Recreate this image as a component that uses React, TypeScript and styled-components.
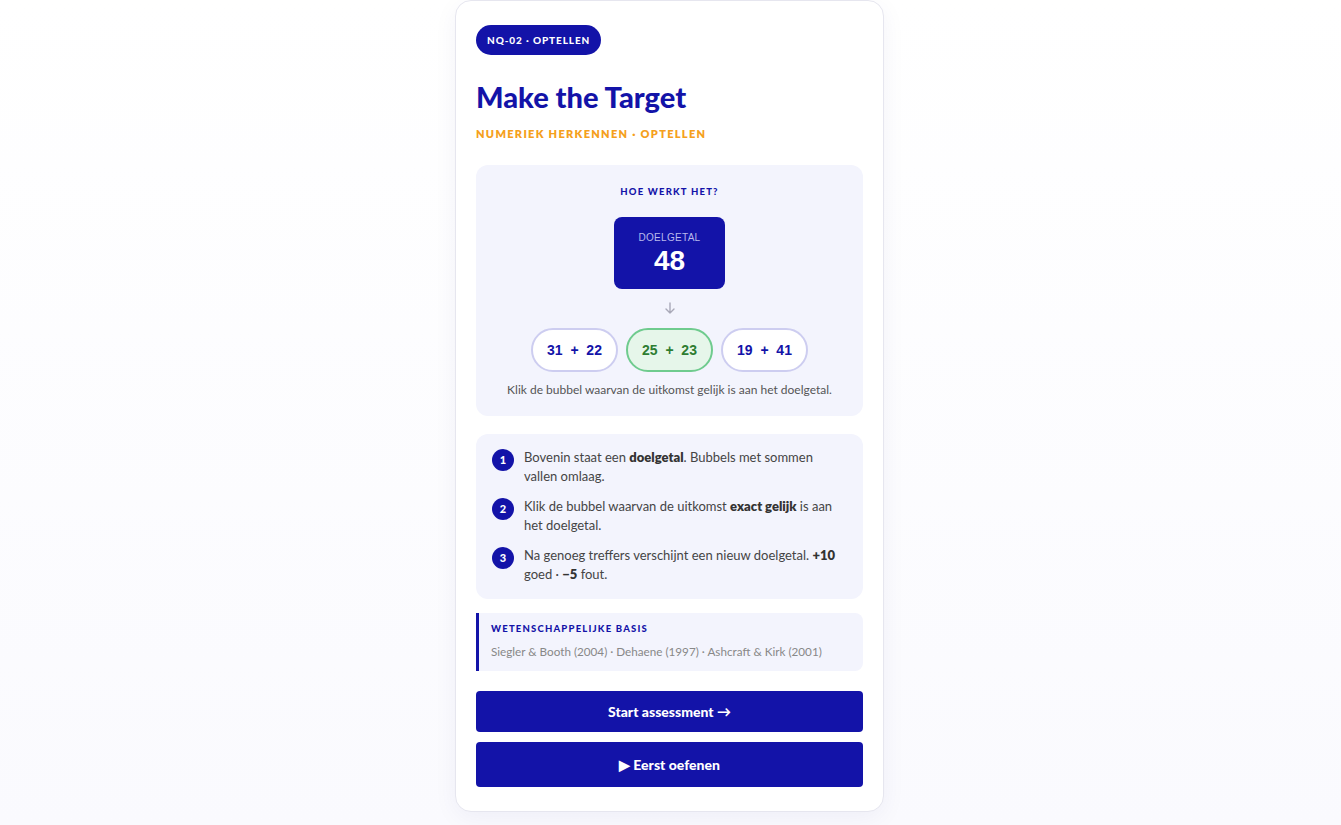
import styled, { createGlobalStyle } from "styled-components";

const Global = createGlobalStyle`
  body {
    margin: 0;
    background: #ffffff;
    font-family: "Lato", "Noto Sans", sans-serif;
    color: #444;
  }
`;

const Page = styled.div`
  display: flex;
  justify-content: center;
  padding: 0 2px 14px 0;
  background: linear-gradient(#ffffff, #fafafe);
`;

const Card = styled.div`
  width: 429px;
  box-sizing: border-box;
  background: #fff;
  border: 1px solid #e6e6ef;
  border-radius: 16px;
  padding: 24px 20px 24px;
  box-shadow: 0 6px 24px rgba(20, 20, 120, 0.05);
  display: flex;
  flex-direction: column;
`;

const Badge = styled.div`
  align-self: flex-start;
  height: 30px;
  display: flex;
  align-items: center;
  padding: 0 11px;
  border-radius: 15px;
  background: #1313a8;
  color: #fff;
  font-size: 10px;
  font-weight: 900;
  letter-spacing: 0.9px;
`;

const Title = styled.h1`
  margin: 25px 0 0;
  font-size: 29px;
  line-height: 34px;
  font-weight: 900;
  color: #1313a8;
`;

const Subtitle = styled.div`
  margin-top: 13px;
  font-size: 11px;
  line-height: 14px;
  font-weight: 800;
  letter-spacing: 1.3px;
  color: #f5a01c;
`;

const Panel = styled.div<{ $top: number }>`
  margin-top: ${(p) => p.$top}px;
  background: #f3f4fd;
  border-radius: 12px;
`;

const HowPanel = styled(Panel)`
  padding: 21px 20px 19px;
  display: flex;
  flex-direction: column;
  align-items: center;
`;

const SmallHead = styled.div`
  font-size: 9.5px;
  line-height: 12px;
  font-weight: 900;
  letter-spacing: 1.2px;
  color: #1313a8;
`;

const Target = styled.div`
  margin-top: 19px;
  width: 111px;
  height: 72px;
  box-sizing: border-box;
  background: #1313a8;
  border-radius: 8px;
  display: flex;
  flex-direction: column;
  align-items: center;
  padding-top: 15px;
`;

const TargetLabel = styled.div`
  font-size: 10px;
  line-height: 12px;
  letter-spacing: 0.3px;
  color: #b9b9ec;
  font-family: "Liberation Sans", Arial, sans-serif;
`;

const TargetValue = styled.div`
  margin-top: 2px;
  font-size: 28px;
  line-height: 30px;
  font-weight: 800;
  color: #fff;
  font-family: "Liberation Sans", Arial, sans-serif;
`;

const Arrow = styled.div`
  margin-top: 12px;
  height: 14px;
  color: #a9a9b8;
  display: flex;
`;

const Bubbles = styled.div`
  margin-top: 13px;
  display: flex;
  gap: 8px;
`;

const Bubble = styled.div<{ $ok?: boolean }>`
  width: 87px;
  height: 44px;
  box-sizing: border-box;
  border-radius: 22px;
  border: 2px solid ${(p) => (p.$ok ? "#6fcb8e" : "#cdcdf0")};
  background: ${(p) => (p.$ok ? "#e6f6ea" : "#ffffff")};
  color: ${(p) => (p.$ok ? "#2e7d32" : "#1313a8")};
  display: flex;
  align-items: center;
  justify-content: center;
  font-family: "Liberation Sans", Arial, sans-serif;
  font-weight: 700;
  font-size: 14px;
  white-space: pre;
`;

const Caption = styled.div`
  margin-top: 11px;
  font-size: 12px;
  line-height: 14px;
  color: #555;
`;

const StepsPanel = styled(Panel)`
  padding: 14px 16px 15px;
  display: flex;
  flex-direction: column;
  gap: 11px;
`;

const Step = styled.div`
  display: flex;
  gap: 10px;
  align-items: flex-start;
`;

const StepNum = styled.div`
  flex: none;
  width: 22px;
  height: 22px;
  border-radius: 50%;
  background: #1313a8;
  color: #fff;
  font-size: 11px;
  font-weight: 900;
  display: flex;
  align-items: center;
  justify-content: center;
  margin-top: 0.5px;
`;

const StepText = styled.div`
  font-size: 13px;
  line-height: 19px;
  color: #454545;

  b {
    font-weight: 800;
    color: #333;
  }
`;

const SciencePanel = styled(Panel)`
  border-radius: 0 8px 8px 0;
  border-left: 3px solid #1313a8;
  padding: 10px 12px 13px;
`;

const Refs = styled.div`
  margin-top: 9px;
  font-size: 11.7px;
  line-height: 14px;
  color: #888;
`;

const Button = styled.button<{ $h: number; $top: number }>`
  margin-top: ${(p) => p.$top}px;
  height: ${(p) => p.$h}px;
  width: 100%;
  border: none;
  border-radius: 4px;
  background: #1313a8;
  color: #fff;
  font-family: "Lato", sans-serif;
  font-size: 14px;
  font-weight: 900;
  cursor: pointer;
`;

export default function App() {
  return (
    <Page>
      <Global />
      <Card>
        <Badge>NQ-02 · OPTELLEN</Badge>
        <Title>Make the Target</Title>
        <Subtitle>NUMERIEK HERKENNEN · OPTELLEN</Subtitle>

        <HowPanel $top={24}>
          <SmallHead>HOE WERKT HET?</SmallHead>
          <Target>
            <TargetLabel>DOELGETAL</TargetLabel>
            <TargetValue>48</TargetValue>
          </Target>
          <Arrow>
            <svg width="12" height="14" viewBox="0 0 12 14" fill="none" stroke="currentColor" strokeWidth="1.4" strokeLinecap="round" strokeLinejoin="round">
              <path d="M6 2v10M2 8l4 4 4-4" />
            </svg>
          </Arrow>
          <Bubbles>
            <Bubble>{"31  +  22"}</Bubble>
            <Bubble $ok>{"25  +  23"}</Bubble>
            <Bubble>{"19  +  41"}</Bubble>
          </Bubbles>
          <Caption>Klik de bubbel waarvan de uitkomst gelijk is aan het doelgetal.</Caption>
        </HowPanel>

        <StepsPanel $top={18}>
          <Step>
            <StepNum>1</StepNum>
            <StepText>
              Bovenin staat een <b>doelgetal</b>. Bubbels met sommen vallen omlaag.
            </StepText>
          </Step>
          <Step>
            <StepNum>2</StepNum>
            <StepText>
              Klik de bubbel waarvan de uitkomst <b>exact gelijk</b> is aan het doelgetal.
            </StepText>
          </Step>
          <Step>
            <StepNum>3</StepNum>
            <StepText>
              Na genoeg treffers verschijnt een nieuw doelgetal. <b>+10</b> goed · <b>−5</b> fout.
            </StepText>
          </Step>
        </StepsPanel>

        <SciencePanel $top={14}>
          <SmallHead>WETENSCHAPPELIJKE BASIS</SmallHead>
          <Refs>Siegler &amp; Booth (2004) · Dehaene (1997) · Ashcraft &amp; Kirk (2001)</Refs>
        </SciencePanel>

        <Button $h={41} $top={20}>Start assessment →</Button>
        <Button $h={45} $top={10}>▶ Eerst oefenen</Button>
      </Card>
    </Page>
  );
}
